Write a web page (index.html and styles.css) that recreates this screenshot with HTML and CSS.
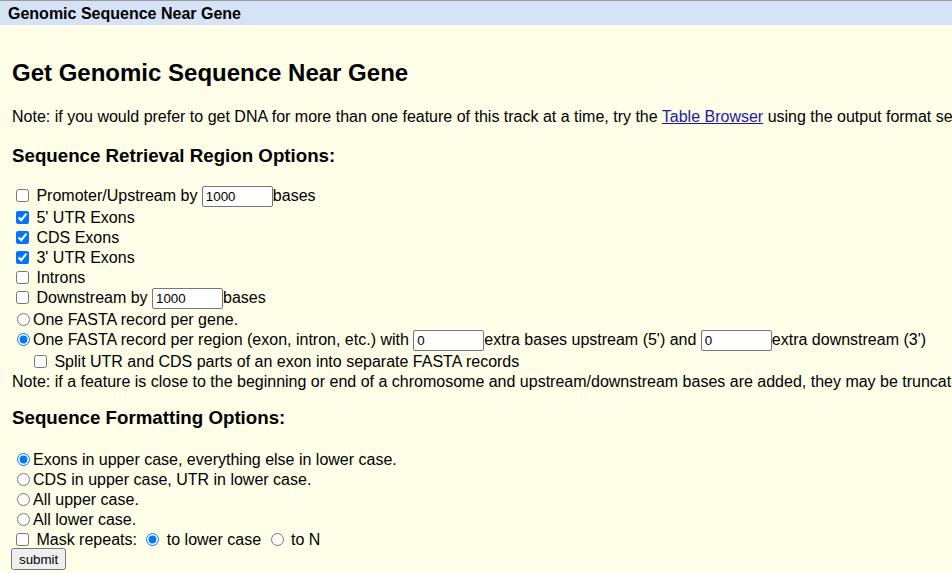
FILE: index.html
```html
<!DOCTYPE html>
<html>
<head>
<meta charset="utf-8">
<title>Genomic Sequence Near Gene</title>
<link rel="stylesheet" href="styles.css">
</head>
<body>
<div class="titlebar">Genomic Sequence Near Gene</div>
<div class="content">
<h2 class="page-title">Get Genomic Sequence Near Gene</h2>
<p class="note">Note: if you would prefer to get DNA for more than one feature of this track at a time, try the <a href="#" class="link">Table Browser</a> using the output format sequence.</p>
<form class="seq-form">
<h3 class="section-title">Sequence Retrieval Region Options:</h3>
<div class="row row-input"><input type="checkbox" class="cb"> Promoter/Upstream by <input type="text" class="num" value="1000">bases</div>
<div class="row"><input type="checkbox" class="cb" checked> 5' UTR Exons</div>
<div class="row"><input type="checkbox" class="cb" checked> CDS Exons</div>
<div class="row"><input type="checkbox" class="cb" checked> 3' UTR Exons</div>
<div class="row"><input type="checkbox" class="cb"> Introns</div>
<div class="row row-input"><input type="checkbox" class="cb"> Downstream by <input type="text" class="num" value="1000">bases</div>
<div class="row"><input type="radio" name="fasta" class="rb">One FASTA record per gene.</div>
<div class="row row-input"><input type="radio" name="fasta" class="rb" checked>One FASTA record per region (exon, intron, etc.) with <input type="text" class="num" value="0">extra bases upstream (5') and <input type="text" class="num" value="0">extra downstream (3')</div>
<div class="row indent"><input type="checkbox" class="cb"> Split UTR and CDS parts of an exon into separate FASTA records</div>
<div class="row">Note: if a feature is close to the beginning or end of a chromosome and upstream/downstream bases are added, they may be truncated in order to avoid extending past the edge of the chromosome.</div>
<h3 class="section-title section-second">Sequence Formatting Options:</h3>
<div class="row"><input type="radio" name="case" class="rb" checked>Exons in upper case, everything else in lower case.</div>
<div class="row"><input type="radio" name="case" class="rb">CDS in upper case, UTR in lower case.</div>
<div class="row"><input type="radio" name="case" class="rb">All upper case.</div>
<div class="row"><input type="radio" name="case" class="rb">All lower case.</div>
<div class="row"><input type="checkbox" class="cb"> Mask repeats: <input type="radio" name="mask" class="rb" checked> to lower case <input type="radio" name="mask" class="rb"> to N</div>
<div class="submit-row"><input type="submit" class="submit" value="submit"></div>
</form>
</div>
</body>
</html>
```
FILE: styles.css
```css
html, body {
  margin: 0;
  padding: 0;
  background: #fffee8;
}
body {
  font-family: "Liberation Sans", Arial, sans-serif;
  font-size: 16px;
  color: #000;
  white-space: nowrap;
}
.titlebar {
  border-top: 1px solid #9a9a9a;
  background: #d6e3f7;
  font-weight: bold;
  font-size: 16px;
  line-height: 26px;
  height: 24px;
  padding-left: 8px;
}
.content {
  padding: 0 12px;
}
.page-title {
  font-size: 24px;
  font-weight: bold;
  margin: 34px 0 21px 0;
}
.note {
  margin: 0;
}
.link {
  color: #1a1aa0;
  text-decoration: underline;
}
.seq-form {
  margin: 0;
}
.section-title {
  font-size: 18.72px;
  font-weight: bold;
  margin: 19px 0 19px 0;
}
.section-second {
  margin: 15px 0 21px 0;
}
.row {
  height: 20px;
  line-height: 20px;
}
.row-input {
  height: 22px;
}
.indent {
  padding-left: 18px;
}
.cb {
  margin: 0 3px 0 4px;
  vertical-align: -1px;
}
.rb {
  margin: 0 3px 0 5px;
  vertical-align: -1px;
}
.num {
  box-sizing: border-box;
  width: 71px;
  height: 21px;
  font-family: "Liberation Sans", Arial, sans-serif;
  font-size: 13.33px;
  padding: 1px 3px;
  border: 1px solid #767676;
  border-radius: 2px;
  background: #fff;
  vertical-align: middle;
}
.submit-row {
  margin-top: -2px;
}
.submit {
  box-sizing: border-box;
  height: 22px;
  margin: 0 0 0 -1px;
  padding: 1px 6px;
  font-family: "Liberation Sans", Arial, sans-serif;
  font-size: 13.33px;
}
```
